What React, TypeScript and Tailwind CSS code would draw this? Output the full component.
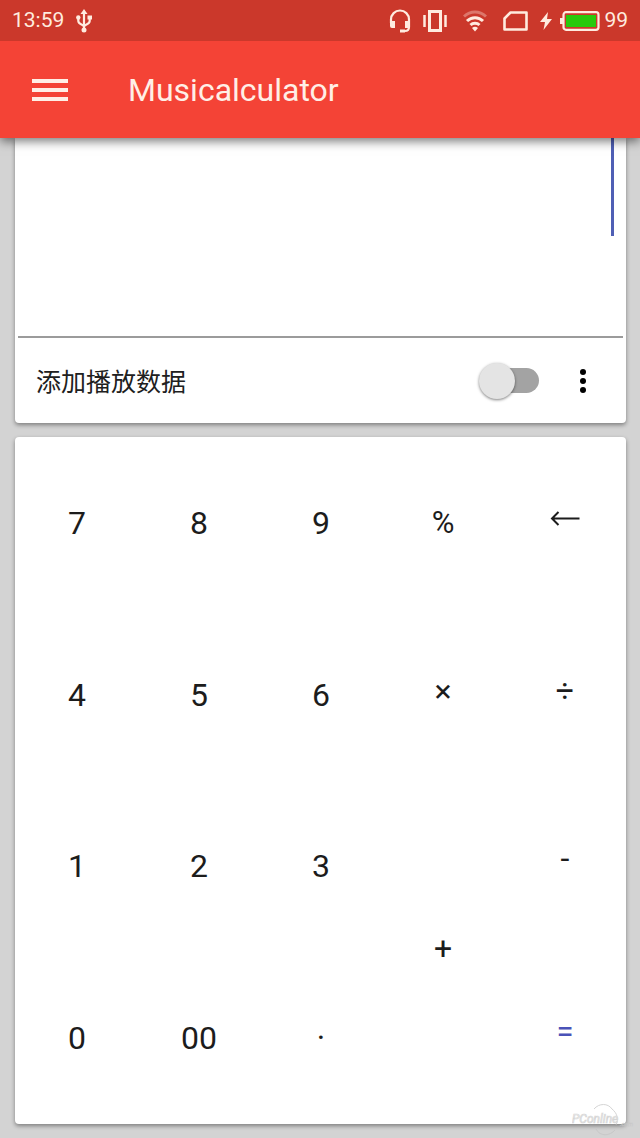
import React, { useState } from "react";

type Key = {
  label: string;
  name?: string;
  className?: string;
};

const keys: Key[] = [
  { label: "7" },
  { label: "8" },
  { label: "9" },
  { label: "%", className: "text-[31px]" },
  { label: "←", name: "backspace", className: "pb-2" },
  { label: "4" },
  { label: "5" },
  { label: "6" },
  { label: "×", name: "multiply", className: "pb-2" },
  { label: "÷", name: "divide", className: "pb-2" },
  { label: "1" },
  { label: "2" },
  { label: "3" },
  {
    label: "+",
    name: "plus",
    className: "row-span-2 pb-2",
  },
  { label: "-", name: "minus", className: "pb-4" },
  { label: "0" },
  { label: "00" },
  { label: "·", name: "point" },
  {
    label: "=",
    name: "equals",
    className: "pb-3 text-[31px] text-[#4a52b8]",
  },
];

const ArrowLeft = () => (
  <svg width="30" height="16" viewBox="0 0 30 16" fill="none" stroke="#1c1c1c" strokeWidth="2">
    <path d="M1.500 7.500H29.500M8.500 1L2 7.500l6.500 6.500" />
  </svg>
);

const StatusBar = () => {
  return (
    <div className="flex h-[41px] items-center justify-between bg-[#cb382b] px-3 text-[21px] text-[#ffebdf]">
      <div className="flex items-center gap-3">
        <span>13:59</span>
        <svg width="16" height="24" viewBox="0 0 16 24" fill="none" stroke="currentColor" strokeWidth="2.200">
          <path d="M8 3v18M2.300 8v4c0 4 5.700 3 5.700 6M13.700 8v4c0 4-5.700 3-5.700 6" />
          <path d="M8 0l3.500 5h-7z" fill="currentColor" stroke="none" />
          <circle cx="8" cy="21" r="2.500" fill="currentColor" stroke="none" />
          <circle cx="2.300" cy="8.500" r="2.200" fill="currentColor" stroke="none" />
          <path d="M11.500 6.500h4.500v4h-4.500z" fill="currentColor" stroke="none" />
        </svg>
      </div>

      <div className="flex items-center">
        <svg width="22" height="24" viewBox="0 0 22 24" fill="none" stroke="currentColor" strokeWidth="2.200" className="mr-3">
          <path d="M2 14v-3.500a9 9 0 0 1 18 0V18c0 3-2 4-4 4" />
          <path d="M1 12h5v7H3a2 2 0 0 1-2-2zM16 12h5v5a2 2 0 0 1-2 2h-3zM11 20.500h5v3h-5z" fill="currentColor" stroke="none" />
        </svg>
        <svg width="24" height="22" viewBox="0 0 24 22" fill="none" stroke="currentColor" className="mr-4">
          <rect x="6.500" y="1.500" width="11" height="19" strokeWidth="3" />
          <path d="M1.500 5v12M22.500 5v12" strokeWidth="2.500" />
        </svg>
        <svg width="24" height="22" viewBox="0 0 24 22" fill="none" stroke="currentColor" strokeWidth="3" className="mr-4">
          <path d="M1 6.500c6.500-6 15.500-6 22 0" opacity="0.35" />
          <path d="M4 11c4.500-4.500 11.500-4.500 16 0M7.500 15c2.500-2.500 6.500-2.500 9 0" />
          <path d="M9 18c2-1.700 4-1.700 6 0l-3 3.500z" fill="currentColor" stroke="none" />
        </svg>
        <svg width="25" height="20" viewBox="0 0 25 20" fill="none" stroke="currentColor" strokeWidth="2.600" className="mr-3">
          <path d="M1.500 7.500L7.500 1.500h16v17h-22z" strokeLinejoin="round" />
        </svg>
        <svg width="12" height="18" viewBox="0 0 12 18" fill="currentColor" className="mr-2">
          <path d="M8 0L0 10h5L3.500 18 12 7H7z" />
        </svg>
        <svg width="40" height="20" viewBox="0 0 40 20" fill="none" className="mr-1">
          <rect x="3.500" y="1.200" width="35" height="17.600" rx="2.500" stroke="currentColor" strokeWidth="2.200" />
          <rect x="6" y="4" width="30" height="12" fill="#28c90c" />
          <path d="M0 7h3v6H0z" fill="currentColor" />
        </svg>
        <span>99</span>
      </div>
    </div>
  );
};

const Navbar = () => {
  return (
    <header className="relative z-10 shadow-[0_3px_10px_rgba(0,0,0,0.55)]">
      <StatusBar />
      <div className="flex h-[97px] items-center bg-[#f44336] px-8">
        <button aria-label="menu" className="flex w-9 flex-col gap-[5px]">
          <span className="h-1 bg-[#ffefe6]" />
          <span className="h-1 bg-[#ffefe6]" />
          <span className="h-1 bg-[#ffefe6]" />
        </button>
        <h1 className="ml-15 text-[32px] text-[#ffefe6]">Musicalculator</h1>
      </div>
    </header>
  );
};

const Display = () => {
  const [playing, setPlaying] = useState(false);

  return (
    <section className="rounded-b bg-white px-[3px] shadow-[0_2px_4px_rgba(0,0,0,0.4)]">
      <div className="flex h-[200px] items-start border-b-2 border-[#9b9b9b] pr-[9px]">
        <input
          aria-label="expression"
          className="h-[98px] min-w-0 flex-1 text-right text-[80px] outline-none"
        />
        <span className="h-[98px] w-[3px] bg-[#4f5fb5]" />
      </div>
      <div className="flex h-[85px] items-center pr-8 pl-[18px]">
        <label
          htmlFor="playing"
          className="flex-1 pt-1 text-[25px] text-[#202020]"
        >
          添加播放数据
        </label>
        <span className="relative mr-9 flex h-9 w-15 items-center">
          <input
            id="playing"
            type="checkbox"
            role="switch"
            checked={playing}
            onChange={() => setPlaying(!playing)}
            className="peer ml-2 h-[25px] w-13 appearance-none rounded-full bg-[#a3a3a3]"
          />
          <span className="pointer-events-none absolute left-0 size-9 rounded-full bg-[#e4e4e4] shadow-[0_1px_3px_rgba(0,0,0,0.5)] peer-checked:left-6" />
        </span>
        <button aria-label="more" className="flex w-4 flex-col items-center gap-[3px]">
          <span className="size-[6px] rounded-full bg-black" />
          <span className="size-[6px] rounded-full bg-black" />
          <span className="size-[6px] rounded-full bg-black" />
        </button>
      </div>
    </section>
  );
};

const Keypad = () => {
  return (
    <section className="grid flex-1 grid-cols-5 grid-rows-4 rounded bg-white pl-px text-[32px] text-[#1c1c1c] shadow-[0_2px_4px_rgba(0,0,0,0.4)]">
      {keys.map(({ label, name, className }) => (
        <button
          key={label}
          aria-label={name}
          className={`flex items-center justify-center ${className ?? ""}`}
        >
          {label === "←" ? <ArrowLeft /> : label}
        </button>
      ))}
    </section>
  );
};

const Watermark = () => {
  return (
    <svg
      width="64"
      height="36"
      viewBox="0 0 64 36"
      fill="none"
      stroke="#c4c4c4"
      className="pointer-events-none absolute right-1 bottom-0 opacity-70"
    >
      <path d="M22 7c5-6 14-6 18 0M24 27c4 8 14 7 19 1M40 7c5 4 7 10 4 16" />
      <text x="0" y="21" fontSize="12" fontStyle="italic" strokeWidth="0.700" fill="#f2f2f2">
        PConline
      </text>
      <text x="48" y="24" fontSize="6" fontStyle="italic" strokeWidth="0.500" fill="#f2f2f2">
        .com
      </text>
    </svg>
  );
};

const App = () => {
  return (
    <div className="relative flex min-h-screen flex-col bg-[#d3d3d3] font-['Roboto','Noto_Sans_CJK_SC',sans-serif]">
      <Navbar />
      <main className="flex flex-1 flex-col gap-[14px] pr-[14px] pb-[14px] pl-[15px]">
        <Display />
        <Keypad />
      </main>
      <Watermark />
    </div>
  );
};

export default App;
